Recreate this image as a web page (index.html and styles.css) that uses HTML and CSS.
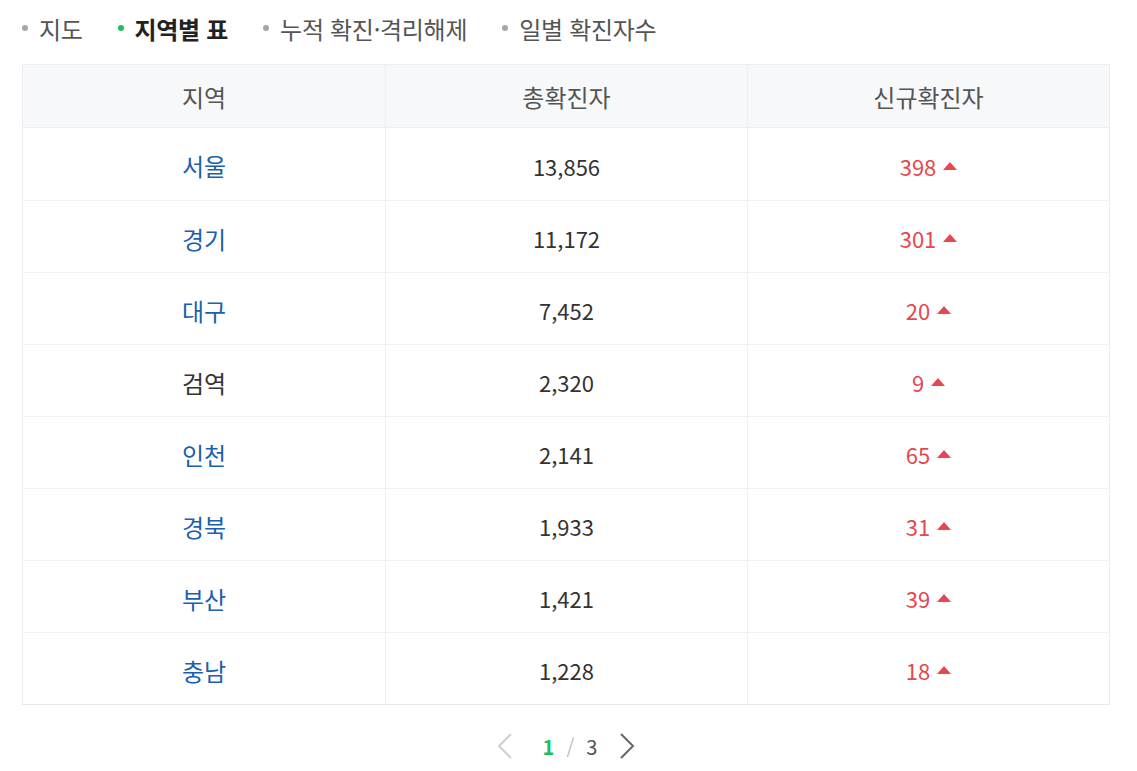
FILE: index.html
```html
<!DOCTYPE html>
<html lang="ko">
<head>
<meta charset="utf-8">
<link rel="stylesheet" href="styles.css">
</head>
<body>
<div class="page">
  <ul class="tabs">
    <li class="tab">지도</li>
    <li class="tab active">지역별 표</li>
    <li class="tab">누적 확진·격리해제</li>
    <li class="tab">일별 확진자수</li>
  </ul>
  <div class="table">
    <div class="row head">
      <div class="cell label">지역</div>
      <div class="cell label">총확진자</div>
      <div class="cell label">신규확진자</div>
    </div>
    <div class="row">
      <div class="cell label region">서울</div>
      <div class="cell">13,856</div>
      <div class="cell new">398<span class="up"></span></div>
    </div>
    <div class="row">
      <div class="cell label region">경기</div>
      <div class="cell">11,172</div>
      <div class="cell new">301<span class="up"></span></div>
    </div>
    <div class="row">
      <div class="cell label region">대구</div>
      <div class="cell">7,452</div>
      <div class="cell new">20<span class="up"></span></div>
    </div>
    <div class="row">
      <div class="cell label">검역</div>
      <div class="cell">2,320</div>
      <div class="cell new">9<span class="up"></span></div>
    </div>
    <div class="row">
      <div class="cell label region">인천</div>
      <div class="cell">2,141</div>
      <div class="cell new">65<span class="up"></span></div>
    </div>
    <div class="row">
      <div class="cell label region">경북</div>
      <div class="cell">1,933</div>
      <div class="cell new">31<span class="up"></span></div>
    </div>
    <div class="row">
      <div class="cell label region">부산</div>
      <div class="cell">1,421</div>
      <div class="cell new">39<span class="up"></span></div>
    </div>
    <div class="row">
      <div class="cell label region">충남</div>
      <div class="cell">1,228</div>
      <div class="cell new">18<span class="up"></span></div>
    </div>
  </div>
  <div class="pager">
    <span class="arrow prev"><svg width="16" height="26" viewBox="0 0 16 26"><path d="M14 1 L2 13 L14 25" fill="none" stroke="#cfcfcf" stroke-width="2"/></svg></span>
    <span class="cur">1</span>
    <span class="slash">/</span>
    <span class="total">3</span>
    <span class="arrow next"><svg width="16" height="26" viewBox="0 0 16 26"><path d="M2 1 L14 13 L2 25" fill="none" stroke="#666" stroke-width="2"/></svg></span>
  </div>
</div>
</body>
</html>
```
FILE: styles.css
```css
* { box-sizing: border-box; }
body {
  margin: 0;
  background: #fff;
  font-family: "Noto Sans CJK KR", "Noto Sans", sans-serif;
  color: #333;
}
.page {
  padding: 0 27px 0 22px;
}
.tabs {
  list-style: none;
  margin: 0;
  padding: 11px 0 0 0;
  height: 64px;
  display: flex;
  gap: 35px;
}
.tab {
  display: flex;
  align-items: center;
  height: 34px;
  font-size: 24px;
  color: #555;
  letter-spacing: -0.3px;
}
.tab::before {
  content: "";
  width: 6px;
  height: 6px;
  border-radius: 50%;
  background: #a6a6a6;
  margin: 0 11px 0 0;
}
.tab.active {
  color: #222;
  font-weight: bold;
}
.tab.active::before { background: #1ec05a; }
.table {
  border: 1px solid #eceef1;
  border-bottom-color: #e6e8eb;
}
.row {
  display: grid;
  grid-template-columns: 1fr 1fr 1fr;
  height: 72px;
  border-top: 1px solid #f0f1f3;
}
.row:first-child { border-top: 0; }
.row.head {
  height: 63px;
  background: #f7f8fa;
  border-bottom: 1px solid #eceef1;
}
.row.head + .row { border-top: 0; }
.row.head .cell { color: #555; padding-top: 0; }
.cell {
  display: flex;
  align-items: center;
  justify-content: center;
  padding-top: 3px;
  font-size: 22px;
  color: #333;
  border-left: 1px solid #eff0f2;
}
.cell.label { font-size: 24px; }
.cell:first-child { border-left: 0; }
.cell.region { color: #1a5fb0; }
.cell.new { color: #e5484d; }
.up {
  width: 0;
  height: 0;
  border-left: 7px solid transparent;
  border-right: 7px solid transparent;
  border-bottom: 8px solid #e5484d;
  margin-left: 7px;
}
.pager {
  display: flex;
  align-items: center;
  justify-content: center;
  height: 82px;
  font-size: 20px;
}
.arrow { display: flex; }
.arrow.prev { margin-right: 30px; }
.arrow.next { margin-left: 22px; }
.cur { color: #1ec05a; font-weight: bold; }
.slash { color: #bbb; margin: 0 12px; }
.total { color: #555; }
```
